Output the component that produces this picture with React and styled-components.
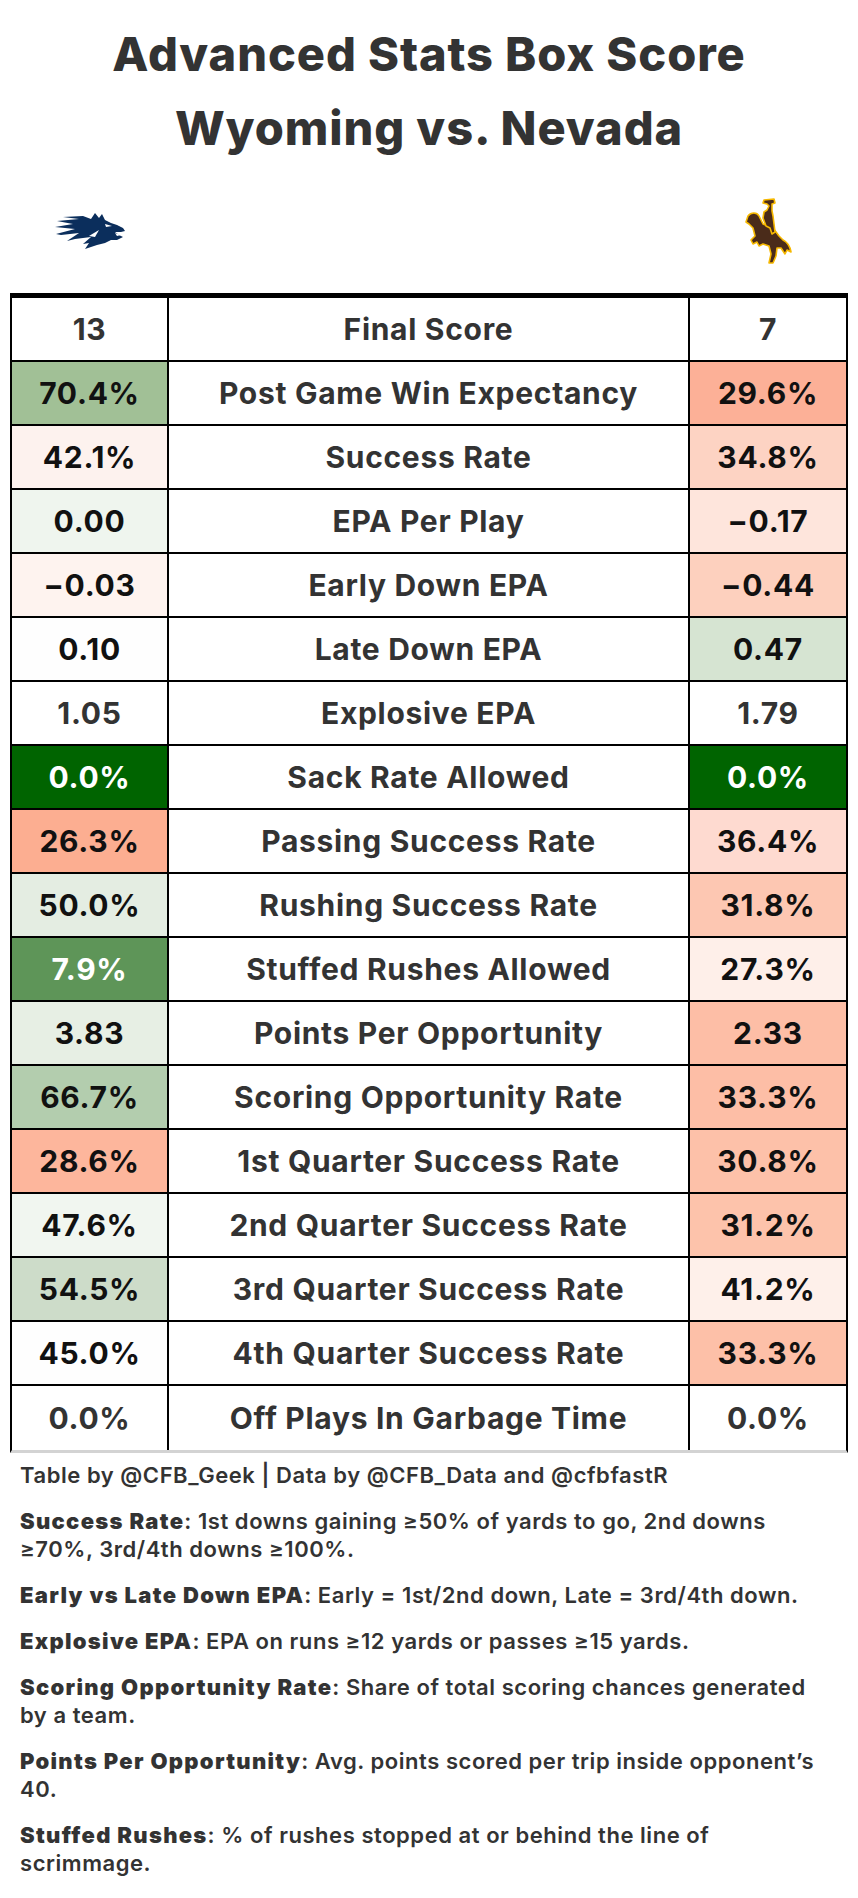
import React from "react";
import styled, { createGlobalStyle } from "styled-components";

const GlobalStyle = createGlobalStyle`
  body {
    margin: 0;
    background: #ffffff;
    font-family: Inter, "Liberation Sans", sans-serif;
  }
`;

const Page = styled.div`
  width: 858px;
  background: #ffffff;
  color: #333333;
  padding-bottom: 20px;
`;

const Header = styled.header`
  padding-top: 17px;
  text-align: center;
`;

const Title = styled.h1`
  margin: 0;
  font-size: 47px;
  line-height: 74px;
  font-weight: 800;
  letter-spacing: 0.9px;
  color: #333333;
`;

const LogoRow = styled.div`
  height: 128px;
  display: flex;
  align-items: center;
  justify-content: space-between;
  padding: 4px 66px 0 53px;
  box-sizing: border-box;
`;

const Table = styled.div`
  margin: 0 10px;
  border-top: 5px solid #000000;
  border-left: 2px solid #000000;
  border-right: 2px solid #000000;
  border-bottom: 3px solid #d3d3d3;
`;

const Row = styled.div`
  display: grid;
  grid-template-columns: 157px 521px 156px;
  height: 64px;
  box-sizing: border-box;
  border-bottom: ${(p) => (p.$last ? "none" : "2px solid #000000")};
`;

const Cell = styled.div`
  display: flex;
  align-items: center;
  justify-content: center;
  font-size: 30px;
  font-weight: 700;
  letter-spacing: 0.7px;
  background: ${(p) => p.$bg || "#ffffff"};
  color: ${(p) => p.$fg || "#333333"};
  border-right: ${(p) => (p.$divider ? "2px solid #000000" : "none")};
`;

const Label = styled(Cell)`
  color: #333333;
`;

const Notes = styled.section`
  padding: 8px 20px 0 20px;
`;

const Note = styled.p`
  margin: 0 0 18px 0;
  font-size: 22px;
  line-height: 28px;
  font-weight: 600;
  letter-spacing: 0.55px;
  color: #333333;
  white-space: nowrap;
`;

const Term = styled.span`
  font-weight: 900;
  letter-spacing: 1.3px;
`;

const NevadaLogo = () => (
  <svg width="72" height="36" viewBox="0 0 72 36">
    <path
      fill="#0b2e5c"
      d="M38 6 L42 0 L46 5 L49 1 L52 7 L58 10 L64 12 L70 15 L72 18 L68 19 L62 19 L66 22 L70 24 L64 27 L58 27 L52 30 L44 32 L32 36 L36 30 L30 31 L38 24 L22 26 L14 28 L26 20 L8 22 L3 21 L22 16 L2 14 L20 11 L4 8 L26 6 L10 4 L30 3 Z"
    />
    <path fill="#ffffff" d="M52 11 L59 13 L53 14 Z" />
    <path fill="#ffffff" d="M62 20 L68 22 L64 23 Z" />
    <path fill="#ffffff" d="M36 23 L46 17 L42 24 Z" />
  </svg>
);

const WyomingLogo = () => (
  <svg width="48" height="68" viewBox="-1 -1 48 68">
    <g fill="#4a2b1a" stroke="#f6b800" strokeWidth="1.6" strokeLinejoin="round">
      <path d="M3 18 C6 14 12 14 14 18 L18 26 L28 30 L34 38 L38 42 C42 44 45 48 46 54 L42 52 L40 56 L36 50 L32 50 L31 58 L28 65 L24 65 L26 56 L24 48 L18 46 L14 48 L12 44 L8 46 L6 42 L10 38 L8 30 L4 26 L1 24 Z" />
      <path d="M19 2 L29 1 L30 5 L27 6 L27 13 L28 18 L29 26 L30 34 L27 36 L25 30 L21 28 L18 20 L19 14 L22 12 L24 8 L22 6 L18 5 Z" />
    </g>
  </svg>
);

const rows = [
  { left: "13", label: "Final Score", right: "7" },
  { left: "70.4%", lbg: "#a1c096", label: "Post Game Win Expectancy", right: "29.6%", rbg: "#fcb097" },
  { left: "42.1%", lbg: "#fdf2ee", label: "Success Rate", right: "34.8%", rbg: "#fdd3c3" },
  { left: "0.00", lbg: "#eff5ee", label: "EPA Per Play", right: "\u22120.17", rbg: "#fee5dc" },
  { left: "\u22120.03", lbg: "#fef3ef", label: "Early Down EPA", right: "\u22120.44", rbg: "#fdd0be" },
  { left: "0.10", lbg: "#fefefe", label: "Late Down EPA", right: "0.47", rbg: "#d6e4d2" },
  { left: "1.05", label: "Explosive EPA", right: "1.79" },
  { left: "0.0%", lbg: "#006400", lfg: "#ffffff", label: "Sack Rate Allowed", right: "0.0%", rbg: "#006400", rfg: "#ffffff" },
  { left: "26.3%", lbg: "#fcae91", label: "Passing Success Rate", right: "36.4%", rbg: "#fedad0" },
  { left: "50.0%", lbg: "#e4ede2", label: "Rushing Success Rate", right: "31.8%", rbg: "#fdc7b2" },
  { left: "7.9%", lbg: "#5e9558", lfg: "#ffffff", label: "Stuffed Rushes Allowed", right: "27.3%", rbg: "#feefe9" },
  { left: "3.83", lbg: "#e7efe4", label: "Points Per Opportunity", right: "2.33", rbg: "#fdbea6" },
  { left: "66.7%", lbg: "#b3cdae", label: "Scoring Opportunity Rate", right: "33.3%", rbg: "#fdbea6" },
  { left: "28.6%", lbg: "#fdb69c", label: "1st Quarter Success Rate", right: "30.8%", rbg: "#fdc1a9" },
  { left: "47.6%", lbg: "#f1f6f0", label: "2nd Quarter Success Rate", right: "31.2%", rbg: "#fdc3ab" },
  { left: "54.5%", lbg: "#cddcc9", label: "3rd Quarter Success Rate", right: "41.2%", rbg: "#fef0ea" },
  { left: "45.0%", lbg: "#fefefe", label: "4th Quarter Success Rate", right: "33.3%", rbg: "#fdc0a8" },
  { left: "0.0%", label: "Off Plays In Garbage Time", right: "0.0%" },
];

const valueColor = (bg, fg) => fg || (bg ? "#111111" : "#333333");

export default function App() {
  return (
    <Page>
      <GlobalStyle />
      <Header>
        <Title>Advanced Stats Box Score</Title>
        <Title>Wyoming vs. Nevada</Title>
      </Header>
      <LogoRow>
        <NevadaLogo />
        <WyomingLogo />
      </LogoRow>
      <Table>
        {rows.map((r, i) => (
          <Row key={r.label} $last={i === rows.length - 1}>
            <Cell $divider $bg={r.lbg} $fg={valueColor(r.lbg, r.lfg)}>
              {r.left}
            </Cell>
            <Label $divider>{r.label}</Label>
            <Cell $bg={r.rbg} $fg={valueColor(r.rbg, r.rfg)}>
              {r.right}
            </Cell>
          </Row>
        ))}
      </Table>
      <Notes>
        <Note>Table by @CFB_Geek | Data by @CFB_Data and @cfbfastR</Note>
        <Note>
          <Term>Success Rate</Term>: 1st downs gaining ≥50% of yards to go, 2nd downs
          <br />
          ≥70%, 3rd/4th downs ≥100%.
        </Note>
        <Note>
          <Term>Early vs Late Down EPA</Term>: Early = 1st/2nd down, Late = 3rd/4th down.
        </Note>
        <Note>
          <Term>Explosive EPA</Term>: EPA on runs ≥12 yards or passes ≥15 yards.
        </Note>
        <Note>
          <Term>Scoring Opportunity Rate</Term>: Share of total scoring chances generated
          <br />
          by a team.
        </Note>
        <Note>
          <Term>Points Per Opportunity</Term>: Avg. points scored per trip inside opponent’s
          <br />
          40.
        </Note>
        <Note>
          <Term>Stuffed Rushes</Term>: % of rushes stopped at or behind the line of
          <br />
          scrimmage.
        </Note>
      </Notes>
    </Page>
  );
}
